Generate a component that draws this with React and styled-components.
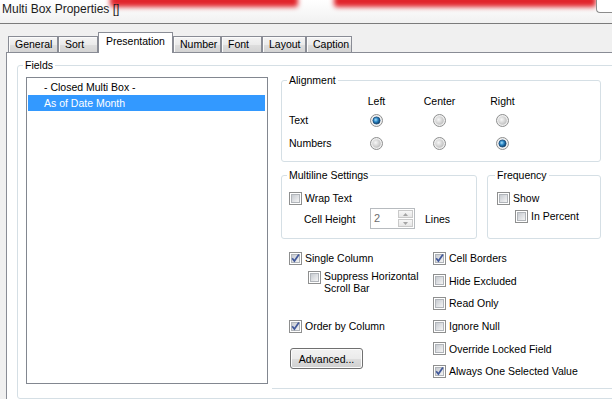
import styled, { createGlobalStyle } from "styled-components";

const GlobalStyle = createGlobalStyle`
  html, body {
    margin: 0;
    padding: 0;
    overflow: hidden;
  }
  body {
    font-family: "Liberation Sans", Arial, sans-serif;
    font-size: 10.5px;
    color: #000;
  }
`;

const tabs = [
  { label: "General", w: 50 },
  { label: "Sort", w: 40 },
  { label: "Presentation", w: 75, active: true },
  { label: "Number", w: 48 },
  { label: "Font", w: 41 },
  { label: "Layout", w: 44 },
  { label: "Caption", w: 46 },
];

const rightOptions = [
  { label: "Cell Borders", checked: true },
  { label: "Hide Excluded" },
  { label: "Read Only" },
  { label: "Ignore Null" },
  { label: "Override Locked Field" },
  { label: "Always One Selected Value", checked: true },
];

const Gradients = () => (
  <svg width="0" height="0" style={{ position: "absolute" }}>
    <defs>
      <linearGradient id="cbFill" x1="0" y1="0" x2="1" y2="1">
        <stop offset="0" stopColor="#c4c8ce" />
        <stop offset="1" stopColor="#f7f7f7" />
      </linearGradient>
      <radialGradient id="rdOuter" cx="0.5" cy="0.5" r="0.5">
        <stop offset="0" stopColor="#ffffff" />
        <stop offset="1" stopColor="#ececec" />
      </radialGradient>
      <radialGradient id="rdInner" cx="0.4" cy="0.4" r="0.6">
        <stop offset="0" stopColor="#f7f7f7" />
        <stop offset="1" stopColor="#c2c2c2" />
      </radialGradient>
      <radialGradient id="rdDot" cx="0.4" cy="0.4" r="0.6">
        <stop offset="0" stopColor="#a8e0fa" />
        <stop offset="0.5" stopColor="#2a86c6" />
        <stop offset="1" stopColor="#0e3f68" />
      </radialGradient>
    </defs>
  </svg>
);

const CheckBox = ({ checked }) => (
  <Mark viewBox="0 0 13 13" width="13" height="13">
    <rect x="0.5" y="0.5" width="12" height="12" fill="#fff" stroke="#8e8f8f" />
    <rect x="2.5" y="2.5" width="8" height="8" fill="url(#cbFill)" stroke="#b1b5ba" />
    {checked && (
      <path d="M3.2 6.2 L5.4 9 L9.9 2.6" fill="none" stroke="#41589a" strokeWidth="1.7" />
    )}
  </Mark>
);

const Radio = ({ checked }) => (
  <Mark viewBox="0 0 13 13" width="13" height="13">
    <circle cx="6.5" cy="6.5" r="6" fill="url(#rdOuter)" stroke="#8e8f8f" />
    {checked ? (
      <circle cx="6.5" cy="6.5" r="3.6" fill="url(#rdDot)" stroke="#1a4a77" strokeWidth="0.8" />
    ) : (
      <circle cx="6.5" cy="6.5" r="4.3" fill="url(#rdInner)" />
    )}
  </Mark>
);

const Arrow = ({ up }) => (
  <svg width="5" height="3" viewBox="0 0 5 3">
    <path d={up ? "M0 3 L2.5 0 L5 3 Z" : "M0 0 L2.5 3 L5 0 Z"} fill="#a4a4a4" />
  </svg>
);

const Check = ({ checked, children }) => (
  <CheckRow>
    <CheckBox checked={checked} />
    <span>{children}</span>
  </CheckRow>
);

const App = () => {
  return (
    <Window>
      <GlobalStyle />
      <Gradients />
      <TitleBar>
        <Title>Multi Box Properties []</Title>
        <Corner />
      </TitleBar>
      <Body>
        <TabStrip>
          {tabs.map((t) => (
            <Tab key={t.label} $w={t.w} $active={t.active}>
              {t.label}
            </Tab>
          ))}
        </TabStrip>
        <Panel>
          <Group $w={620} $h={340} $pl={7} $pt={2}>
            <Legend>Fields</Legend>
            <FieldsRow>
              <ListBox>
                <ListItem>- Closed Multi Box -</ListItem>
                <ListItem $selected>As of Date Month</ListItem>
              </ListBox>
              <RightCol>
                <Group $w={320} $h={88} $pl={7} $pt={7}>
                  <Legend>Alignment</Legend>
                  <AlignGrid>
                    <span />
                    <ColHead>Left</ColHead>
                    <ColHead>Center</ColHead>
                    <ColHead>Right</ColHead>
                    <span>Text</span>
                    <Cell><Radio checked /></Cell>
                    <Cell><Radio /></Cell>
                    <Cell><Radio /></Cell>
                    <span>Numbers</span>
                    <Cell><Radio /></Cell>
                    <Cell><Radio /></Cell>
                    <Cell><Radio checked /></Cell>
                  </AlignGrid>
                </Group>
                <GroupRow>
                  <Group $w={196} $h={70} $pl={7} $pt={8}>
                    <Legend>Multiline Settings</Legend>
                    <Check>Wrap Text</Check>
                    <SpinRow>
                      <SpinLabel>Cell Height</SpinLabel>
                      <SpinBox>
                        <SpinValue>2</SpinValue>
                        <SpinButtons>
                          <SpinButton><Arrow up /></SpinButton>
                          <SpinButton><Arrow /></SpinButton>
                        </SpinButtons>
                      </SpinBox>
                      <SpinUnit>Lines</SpinUnit>
                    </SpinRow>
                  </Group>
                  <Group $w={114} $h={70} $pl={9} $pt={8}>
                    <Legend>Frequency</Legend>
                    <Check>Show</Check>
                    <Indented>
                      <Check>In Percent</Check>
                    </Indented>
                  </Group>
                </GroupRow>
                <Options>
                  <OptionsLeft>
                    <Check checked>Single Column</Check>
                    <SubCheck>
                      <CheckBox />
                      <span>
                        Suppress Horizontal
                        <br />
                        Scroll Bar
                      </span>
                    </SubCheck>
                    <Spaced>
                      <Check checked>Order by Column</Check>
                    </Spaced>
                    <Button>Advanced...</Button>
                  </OptionsLeft>
                  <OptionsRight>
                    {rightOptions.map((o) => (
                      <Check key={o.label} checked={o.checked}>
                        {o.label}
                      </Check>
                    ))}
                  </OptionsRight>
                </Options>
              </RightCol>
            </FieldsRow>
          </Group>
        </Panel>
      </Body>
    </Window>
  );
};

export default App;

const Window = styled.div`
  width: 612px;
  height: 399px;
  overflow: hidden;
  background: #f0f0f0;
  display: flex;
  flex-direction: column;
`;

const TitleBar = styled.div`
  position: relative;
  flex: none;
  height: 23px;
  display: flex;
  align-items: flex-start;
  background: linear-gradient(#ffffff, #f1f1f1);
  border-bottom: 1px solid #7b7b7b;
  overflow: hidden;

  &::before,
  &::after {
    content: "";
    position: absolute;
    top: -5px;
    height: 12px;
    background: #e1232a;
    filter: blur(2.5px);
    border-radius: 3px;
  }
  &::before {
    left: 110px;
    width: 188px;
  }
  &::after {
    left: 334px;
    width: 262px;
  }
`;

const Title = styled.div`
  position: relative;
  z-index: 1;
  padding: 2px 0 0 2px;
  font-size: 12px;
  line-height: 15px;
  color: #1b1b1b;
`;

const Corner = styled.div`
  position: relative;
  z-index: 1;
  margin-left: auto;
  width: 15px;
  height: 12px;
  background: #fff;
  border-left: 1px solid #8c8c8c;
  border-bottom: 1px solid #8c8c8c;
  border-bottom-left-radius: 4px;
`;

const Body = styled.div`
  flex: 1;
  display: flex;
  flex-direction: column;
  padding-left: 6px;
`;

const TabStrip = styled.div`
  position: relative;
  z-index: 1;
  flex: none;
  height: 28px;
  display: flex;
  align-items: flex-end;
  padding-left: 2px;
`;

const Tab = styled.div`
  box-sizing: border-box;
  width: ${(p) => p.$w}px;
  height: ${(p) => (p.$active ? 21 : 16)}px;
  margin-bottom: ${(p) => (p.$active ? -1 : 0)}px;
  padding: ${(p) => (p.$active ? "1px 0 0 7px" : "0 0 0 6px")};
  line-height: ${(p) => (p.$active ? 14 : 15)}px;
  border: 1px solid #898c95;
  border-bottom: none;
  background: ${(p) =>
    p.$active
      ? "#fff"
      : "linear-gradient(#f4f4f4, #ebebeb 50%, #dedede 51%, #d3d3d3)"};
  box-shadow: ${(p) => (p.$active ? "none" : "inset 1px 1px 0 #fbfbfb")};
  white-space: nowrap;
`;

const Panel = styled.div`
  flex: 1;
  width: 640px;
  background: #fff;
  border-top: 1px solid #898c95;
  border-left: 1px solid #898c95;
  padding: 6px 0 0 10px;
`;

const Group = styled.fieldset`
  box-sizing: border-box;
  margin: 0;
  min-width: 0;
  width: ${(p) => p.$w}px;
  height: ${(p) => p.$h}px;
  padding: ${(p) => p.$pt}px 0 0 ${(p) => p.$pl}px;
  border: 1px solid #d5dfe5;
  border-radius: 3px;
`;

const Legend = styled.legend`
  margin-left: -2px;
  padding: 0 2px;
  line-height: 13px;
  font-size: 10.5px;
`;

const FieldsRow = styled.div`
  display: flex;
  gap: 13px;
`;

const ListBox = styled.div`
  box-sizing: border-box;
  flex: none;
  margin: 3px 0 0 1px;
  width: 242px;
  height: 307px;
  padding: 1px 2px 0 1px;
  border: 1px solid #828790;
  background: #fff;
`;

const ListItem = styled.div`
  height: 16px;
  line-height: 16px;
  padding-left: 16px;
  background: ${(p) => (p.$selected ? "#3399ff" : "transparent")};
  color: ${(p) => (p.$selected ? "#fff" : "#000")};
`;

const RightCol = styled.div`
  width: 320px;
  display: flex;
  flex-direction: column;
`;

const AlignGrid = styled.div`
  display: grid;
  grid-template-columns: 56px 63px 63px 63px;
  grid-template-rows: 14px 24px 22px;
  align-items: center;
`;

const ColHead = styled.span`
  justify-self: center;
`;

const Cell = styled.div`
  display: flex;
  justify-content: center;
`;

const Mark = styled.svg`
  display: block;
  flex: none;
`;

const GroupRow = styled.div`
  display: flex;
  gap: 10px;
  margin-top: 7px;
`;

const CheckRow = styled.div`
  display: flex;
  align-items: center;
  gap: 3px;
  height: 16px;
  white-space: nowrap;
`;

const Indented = styled.div`
  margin-top: 2px;
  padding-left: 18px;
`;

const SpinRow = styled.div`
  display: flex;
  align-items: center;
  height: 21px;
  margin-top: 2px;
  padding-left: 15px;
`;

const SpinLabel = styled.span`
  width: 66px;
`;

const SpinBox = styled.div`
  box-sizing: border-box;
  display: flex;
  width: 45px;
  height: 21px;
  border: 1px solid #b7bbbf;
  background: #fff;
`;

const SpinValue = styled.span`
  flex: 1;
  padding-left: 3px;
  line-height: 19px;
  font-size: 11px;
  color: #6d6d6d;
`;

const SpinButtons = styled.div`
  display: flex;
  flex-direction: column;
  gap: 1px;
  width: 15px;
  padding: 1px 1px 1px 0;
`;

const SpinButton = styled.div`
  flex: 1;
  display: grid;
  place-items: center;
  border: 1px solid #c9c9c9;
  background: linear-gradient(#f7f7f7, #e6e6e6);
`;

const SpinUnit = styled.span`
  margin-left: 10px;
`;

const Options = styled.div`
  display: flex;
  margin: 11px -20px 0 -9px;
  padding: 0 0 8.5px 17px;
  border-bottom: 1px solid #d5dfe5;
`;

const OptionsLeft = styled.div`
  width: 144px;
  display: flex;
  flex-direction: column;
  align-items: flex-start;
`;

const SubCheck = styled.div`
  display: flex;
  align-items: flex-start;
  gap: 3px;
  margin-top: 4px;
  padding-left: 19px;
  line-height: 12px;

  svg {
    margin-top: 1px;
  }
`;

const Spaced = styled.div`
  margin-top: 24px;
`;

const Button = styled.button`
  box-sizing: border-box;
  margin: 14px 0 0 1px;
  width: 73px;
  height: 21px;
  padding: 0;
  font-family: inherit;
  font-size: 10.5px;
  color: #000;
  border: 1px solid #707070;
  border-radius: 3px;
  background: linear-gradient(#f2f2f2, #ebebeb 50%, #dddddd 51%, #cfcfcf);
  box-shadow: inset 0 0 0 1px #fcfcfc;
`;

const OptionsRight = styled.div`
  display: flex;
  flex-direction: column;
  gap: 6.7px;
`;
